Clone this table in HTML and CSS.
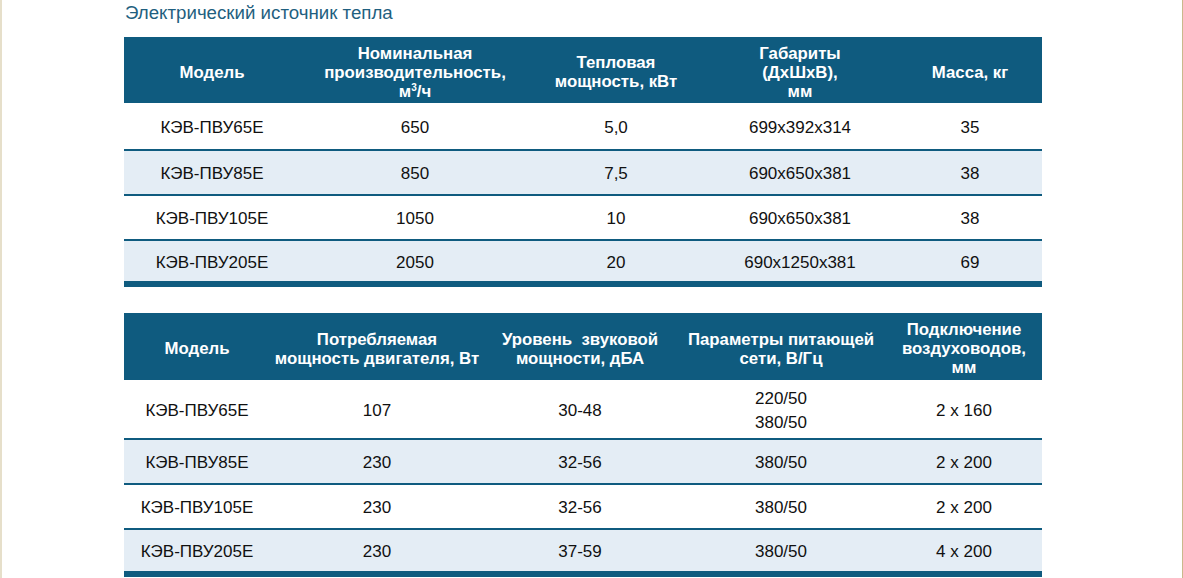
FILE: index.html
```html
<!DOCTYPE html>
<html lang="ru">
<head>
<meta charset="utf-8">
<title>Электрический источник тепла</title>
<link rel="stylesheet" href="styles.css">
</head>
<body>
<div class="page">
  <div class="content">
    <h1 class="title">Электрический источник тепла</h1>

    <div class="spec t1">
      <div class="head">
        <div class="hc"><span>Модель</span></div>
        <div class="hc"><span>Номинальная<br>производительность,<br>м<sup class="sup">3</sup>/ч</span></div>
        <div class="hc"><span>Тепловая<br>мощность, кВт</span></div>
        <div class="hc"><span>Габариты<br>(ДхШхВ),<br>мм</span></div>
        <div class="hc"><span>Масса, кг</span></div>
      </div>
      <div class="row r46">
        <div>КЭВ-ПВУ65Е</div><div>650</div><div>5,0</div><div>699x392x314</div><div>35</div>
      </div>
      <div class="row alt r43">
        <div>КЭВ-ПВУ85Е</div><div>850</div><div>7,5</div><div>690x650x381</div><div>38</div>
      </div>
      <div class="row r43">
        <div>КЭВ-ПВУ105Е</div><div>1050</div><div>10</div><div>690x650x381</div><div>38</div>
      </div>
      <div class="row alt r40 last">
        <div>КЭВ-ПВУ205Е</div><div>2050</div><div>20</div><div>690x1250x381</div><div>69</div>
      </div>
    </div>

    <div class="spec t2">
      <div class="head">
        <div class="hc"><span>Модель</span></div>
        <div class="hc"><span>Потребляемая<br>мощность двигателя, Вт</span></div>
        <div class="hc"><span>Уровень&nbsp; звуковой<br>мощности, дБА</span></div>
        <div class="hc"><span>Параметры питающей<br>сети, В/Гц</span></div>
        <div class="hc"><span>Подключение<br>воздуховодов,<br>мм</span></div>
      </div>
      <div class="row r58">
        <div>КЭВ-ПВУ65Е</div><div>107</div><div>30-48</div><div class="two"><span>220/50<br>380/50</span></div><div>2 x 160</div>
      </div>
      <div class="row alt r43">
        <div>КЭВ-ПВУ85Е</div><div>230</div><div>32-56</div><div>380/50</div><div>2 x 200</div>
      </div>
      <div class="row r43">
        <div>КЭВ-ПВУ105Е</div><div>230</div><div>32-56</div><div>380/50</div><div>2 x 200</div>
      </div>
      <div class="row alt r41 last">
        <div>КЭВ-ПВУ205Е</div><div>230</div><div>37-59</div><div>380/50</div><div>4 x 200</div>
      </div>
    </div>
  </div>
</div>
</body>
</html>
```

FILE: styles.css
```css
html, body {
  margin: 0;
  padding: 0;
  background: #ffffff;
}

.page {
  box-sizing: border-box;
  width: 1183px;
  min-height: 578px;
  border-left: 2px solid #e6dfca;
  border-right: 1px solid #c9b98c;
  font-family: "Liberation Sans", Arial, sans-serif;
  color: #111111;
  overflow: hidden;
}

.content {
  padding-left: 122px;
  width: 918px;
}

.title {
  margin: 0 0 11px 1px;
  font-size: 18.7px;
  line-height: 26px;
  font-weight: normal;
  color: #1f5f80;
}

.spec {
  width: 918px;
}

.t2 {
  margin-top: 26px;
}

.t1 .head,
.t1 .row {
  display: grid;
  grid-template-columns: 176px 230px 172px 196px 144px;
}

.t2 .head,
.t2 .row {
  display: grid;
  grid-template-columns: 146px 214px 192px 210px 156px;
}

.head {
  background: #0f5b7f;
  color: #ffffff;
  font-weight: bold;
  font-size: 16.8px;
  line-height: 19px;
  box-sizing: border-box;
  padding-top: 4px;
}

.t1 .head { height: 66px; }
.t2 .head { height: 67px; }

.hc {
  display: flex;
  align-items: center;
  justify-content: center;
  text-align: center;
}

.sup {
  font-size: 10px;
  line-height: 0;
  vertical-align: 6px;
}

.row {
  box-sizing: border-box;
  font-size: 17px;
  line-height: 20px;
  padding-top: 3px;
  border-bottom: 2px solid #0f5b7f;
}

.row > div {
  display: flex;
  align-items: center;
  justify-content: center;
  text-align: center;
}

.row .two {
  line-height: 24px;
}

.row.alt {
  background: #e4edf5;
}

.row.last {
  border-bottom: 6px solid #0f5b7f;
}

.r46 { height: 48px; }
.r43 { height: 45px; }
.r40 { height: 46px; }
.r58 { height: 60px; }
.r41 { height: 47px; }
```
